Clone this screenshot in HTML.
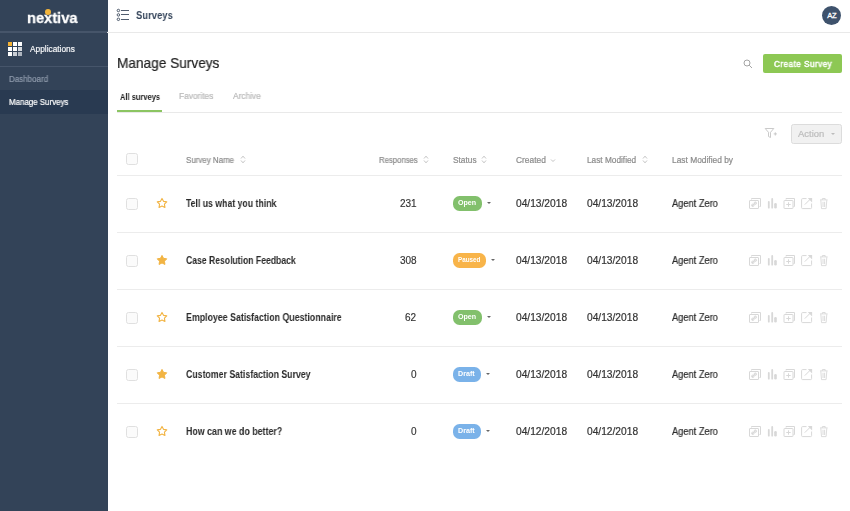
<!DOCTYPE html>
<html><head><meta charset="utf-8">
<style>
*{margin:0;padding:0;box-sizing:border-box}
html,body{width:850px;height:511px;overflow:hidden;background:#fff;font-family:"Liberation Sans",sans-serif}
[id^=t]{will-change:transform;-webkit-text-stroke:0.2px currentColor}
.abs{position:absolute}
.cb{position:absolute;width:12.4px;height:12.2px;border:1px solid #e0e0e0;border-radius:2.5px;background:#fbfbfb}
.badge{position:absolute;height:14.3px;border-radius:6.5px}
.caret{position:absolute;width:0;height:0;border-left:2.5px solid transparent;border-right:2.5px solid transparent;border-top:2.5px solid #666}
</style></head>
<body>
<div class="abs" style="left:0;top:0;width:107.5px;height:511px;background:#334358"></div>
<div class="abs" style="left:0;top:31.4px;width:107.5px;height:1.3px;background:#46556a"></div>
<div class="abs" style="left:0;top:66px;width:107.5px;height:1px;background:#46556a"></div>
<div class="abs" style="left:0;top:90px;width:107.5px;height:24px;background:#293a51"></div>

<div id="t0" style="position:absolute;white-space:nowrap;line-height:1;top:10px;font-size:15.5px;color:#fff;font-weight:bold;-webkit-text-stroke:0;-webkit-text-stroke:0.3px #fff;left:27.03px;transform:scaleX(0.9463);transform-origin:0 0">nextiva</div>
<div class="abs" style="left:45.2px;top:8.8px;width:5.8px;height:5.8px;border-radius:50%;background:#f3b53c"></div>
<div class="abs" style="left:7.8px;top:42px;width:4px;height:4px;background:#f5b335"></div>
<div class="abs" style="left:12.8px;top:42px;width:4px;height:4px;background:#fff"></div>
<div class="abs" style="left:17.8px;top:42px;width:4px;height:4px;background:#fff"></div>
<div class="abs" style="left:7.8px;top:47px;width:4px;height:4px;background:#fff"></div>
<div class="abs" style="left:12.8px;top:47px;width:4px;height:4px;background:#fff"></div>
<div class="abs" style="left:17.8px;top:47px;width:4px;height:4px;background:#d5d9de"></div>
<div class="abs" style="left:7.8px;top:52px;width:4px;height:4px;background:#fff"></div>
<div class="abs" style="left:12.8px;top:52px;width:4px;height:4px;background:#c9ced5"></div>
<div class="abs" style="left:17.8px;top:52px;width:4px;height:4px;background:#aeb5bf"></div>
<div id="t1" style="position:absolute;white-space:nowrap;line-height:1;top:44.8px;font-size:8.3px;color:#f4f5f7;font-weight:normal;left:30.39px;transform:scaleX(1.0022);transform-origin:0 0">Applications</div>
<div id="t2" style="position:absolute;white-space:nowrap;line-height:1;top:74.5px;font-size:8.3px;color:#8e9aab;font-weight:normal;left:8.60px;transform:scaleX(0.9634);transform-origin:0 0">Dashboard</div>
<div id="t3" style="position:absolute;white-space:nowrap;line-height:1;top:98.4px;font-size:8.3px;color:#fff;font-weight:normal;left:8.61px;transform:scaleX(0.9548);transform-origin:0 0">Manage Surveys</div>
<div class="abs" style="left:107px;top:32px;width:743px;height:1px;background:#e9e9e9"></div>
<svg class="abs" style="left:116px;top:8px" width="14" height="14" viewBox="0 0 14 14"><g fill="none" stroke="#3d4b5e" stroke-width="0.9"><circle cx="2.4" cy="2.5" r="1.25"/><circle cx="2.4" cy="6.9" r="1.25"/><circle cx="2.4" cy="11.3" r="1.25"/><path d="M5 2.5H13M5 6.5H13M5 11.5H13"/></g></svg>
<div id="t4" style="position:absolute;white-space:nowrap;line-height:1;top:9.6px;font-size:11px;color:#34445a;font-weight:bold;-webkit-text-stroke:0;left:136.00px;transform:scaleX(0.8605);transform-origin:0 0">Surveys</div>
<div class="abs" style="left:822.2px;top:5.6px;width:19.2px;height:19.2px;border-radius:50%;background:#3e526c;color:#fff;font-size:7.6px;font-weight:normal;-webkit-text-stroke:0.3px #fff;text-align:center;line-height:19.5px;letter-spacing:-0.2px">AZ</div>
<div id="t5" style="position:absolute;white-space:nowrap;line-height:1;top:56px;font-size:14.2px;color:#222;font-weight:normal;left:116.62px;transform:scaleX(0.9619);transform-origin:0 0">Manage Surveys</div>
<svg class="abs" style="left:743px;top:59px" width="10" height="10" viewBox="0 0 10 10"><g fill="none" stroke="#9a9a9a" stroke-width="0.9"><circle cx="4" cy="4" r="3"/><path d="M6.2 6.2L9 9"/></g></svg>
<div class="abs" style="left:763px;top:54px;width:78.5px;height:19px;border-radius:2px;background:#8dc854"></div>
<div id="t6" style="position:absolute;white-space:nowrap;line-height:1;top:59.9px;font-size:8.4px;color:#fff;font-weight:normal;letter-spacing:0.5px;-webkit-text-stroke:0.45px #fff;left:773.60px;transform:scaleX(0.9700);transform-origin:0 0">Create Survey</div>
<div id="t7" style="position:absolute;white-space:nowrap;line-height:1;top:92.7px;font-size:8.8px;color:#222;font-weight:bold;-webkit-text-stroke:0;left:119.73px;transform:scaleX(0.8532);transform-origin:0 0">All surveys</div>
<div id="t8" style="position:absolute;white-space:nowrap;line-height:1;top:92.2px;font-size:8.6px;color:#b9b9b9;font-weight:normal;left:178.79px;transform:scaleX(0.9743);transform-origin:0 0">Favorites</div>
<div id="t9" style="position:absolute;white-space:nowrap;line-height:1;top:92.2px;font-size:8.6px;color:#b9b9b9;font-weight:normal;left:232.79px;transform:scaleX(0.9690);transform-origin:0 0">Archive</div>
<div class="abs" style="left:117px;top:112px;width:725px;height:1px;background:#e9e9e9"></div>
<div class="abs" style="left:117px;top:110.2px;width:45px;height:2px;background:#8cc562"></div>
<svg class="abs" style="left:764px;top:127px" width="15" height="12" viewBox="0 0 15 12"><g fill="none" stroke="#c4c4c4" stroke-width="0.9"><path d="M1.2 1.5H9.8L6.5 5.3V10.5L4.5 9.5V5.3Z"/><path d="M11.3 5.3V8.5M9.7 6.9H12.9"/></g></svg>
<div class="abs" style="left:791px;top:124px;width:51px;height:19.5px;border-radius:2.5px;background:#f1f1f1;border:1px solid #dcdcdc"></div>
<div id="t10" style="position:absolute;white-space:nowrap;line-height:1;top:129.5px;font-size:8.6px;color:#bcbcbc;font-weight:normal;left:798.00px;transform:scaleX(1.1000);transform-origin:0 0">Action</div>
<div class="caret" style="left:830.5px;top:133px;border-top-color:#bcbcbc"></div>
<div class="cb" style="left:126px;top:153.2px"></div>
<div id="t11" style="position:absolute;white-space:nowrap;line-height:1;top:156.5px;font-size:8.2px;color:#8c8c8c;font-weight:normal;left:186.21px;transform:scaleX(0.9680);transform-origin:0 0">Survey Name</div><svg class="abs" style="left:239.5px;top:154.8px" width="6" height="9" viewBox="0 0 6 9"><path d="M1 3.5L3 1.2L5 3.5M1 5.5L3 7.8L5 5.5" fill="none" stroke="#aaaaaa" stroke-width="0.7"/></svg>
<div id="t12" style="position:absolute;white-space:nowrap;line-height:1;top:156.5px;font-size:8.2px;color:#8c8c8c;font-weight:normal;left:379.40px;transform:scaleX(0.9463);transform-origin:0 0">Responses</div><svg class="abs" style="left:422.5px;top:154.8px" width="6" height="9" viewBox="0 0 6 9"><path d="M1 3.5L3 1.2L5 3.5M1 5.5L3 7.8L5 5.5" fill="none" stroke="#aaaaaa" stroke-width="0.7"/></svg>
<div id="t13" style="position:absolute;white-space:nowrap;line-height:1;top:156.5px;font-size:8.2px;color:#8c8c8c;font-weight:normal;left:453.00px;transform:scaleX(1.0174);transform-origin:0 0">Status</div><svg class="abs" style="left:481px;top:154.8px" width="6" height="9" viewBox="0 0 6 9"><path d="M1 3.5L3 1.2L5 3.5M1 5.5L3 7.8L5 5.5" fill="none" stroke="#aaaaaa" stroke-width="0.7"/></svg>
<div id="t14" style="position:absolute;white-space:nowrap;line-height:1;top:156.5px;font-size:8.2px;color:#8c8c8c;font-weight:normal;left:516.00px;transform:scaleX(1.0241);transform-origin:0 0">Created</div>
<svg class="abs" style="left:550px;top:157.5px" width="6" height="5" viewBox="0 0 6 5"><path d="M1 1.5L3 3.5L5 1.5" fill="none" stroke="#aaaaaa" stroke-width="0.7"/></svg>
<div id="t15" style="position:absolute;white-space:nowrap;line-height:1;top:156.5px;font-size:8.2px;color:#8c8c8c;font-weight:normal;left:587.38px;transform:scaleX(1.0102);transform-origin:0 0">Last Modified</div><svg class="abs" style="left:641.5px;top:154.8px" width="6" height="9" viewBox="0 0 6 9"><path d="M1 3.5L3 1.2L5 3.5M1 5.5L3 7.8L5 5.5" fill="none" stroke="#aaaaaa" stroke-width="0.7"/></svg>
<div id="t16" style="position:absolute;white-space:nowrap;line-height:1;top:156.5px;font-size:8.2px;color:#8c8c8c;font-weight:normal;left:671.59px;transform:scaleX(1.0233);transform-origin:0 0">Last Modified by</div>
<div class="abs" style="left:117px;top:175px;width:725px;height:1px;background:#ececec"></div>
<div class="cb" style="left:126px;top:198.3px"></div>
<svg class="abs" style="left:156.3px;top:197px" width="12" height="12" viewBox="0 0 12 12"><path d="M6.00 1.40L7.50 4.34L10.76 4.85L8.43 7.19L8.94 10.45L6.00 8.95L3.06 10.45L3.57 7.19L1.24 4.85L4.50 4.34Z" fill="none" stroke="#f2b443" stroke-width="1.1" stroke-linejoin="round"/></svg>
<div id="t17" style="position:absolute;white-space:nowrap;line-height:1;top:199px;font-size:10.4px;color:#2a2a2a;font-weight:bold;-webkit-text-stroke:0;left:186.26px;transform:scaleX(0.8380);transform-origin:0 0">Tell us what you think</div>
<div style="position:absolute;white-space:nowrap;line-height:1;right:433.8px;top:198.7px;font-size:10px;color:#333;will-change:transform;-webkit-text-stroke:0.15px currentColor">231</div>
<div class="badge" style="left:453px;top:196.3px;width:29px;background:#82c06c"></div>
<div id="t18" style="position:absolute;white-space:nowrap;line-height:1;top:200.1px;font-size:6.3px;color:#fff;font-weight:bold;-webkit-text-stroke:0;left:457.94px;transform:scaleX(1.1250);transform-origin:0 0">Open</div>
<div class="caret" style="left:486.5px;top:202px"></div>
<div id="t19" style="position:absolute;white-space:nowrap;line-height:1;top:198.5px;font-size:10px;color:#333;font-weight:normal;left:515.59px;transform:scaleX(1.0200);transform-origin:0 0">04/13/2018</div>
<div id="t20" style="position:absolute;white-space:nowrap;line-height:1;top:198.5px;font-size:10px;color:#333;font-weight:normal;left:587.00px;transform:scaleX(1.0200);transform-origin:0 0">04/13/2018</div>
<div id="t21" style="position:absolute;white-space:nowrap;line-height:1;top:198.7px;font-size:10.1px;color:#2a2a2a;font-weight:normal;left:672.00px;transform:scaleX(0.9200);transform-origin:0 0">Agent Zero</div>
<svg class="abs" style="left:748px;top:197px" width="82" height="13" viewBox="0 0 82 13"><g fill="none" stroke="#d8d8d8" stroke-width="1"><path d="M3.5 2.5V1.5H12.5V9.5H11.5"/><rect x="1.5" y="3.5" width="9" height="8" rx="0.5"/><path d="M4 9L8 5.5"/><circle cx="4.8" cy="8.3" r="1.2"/><circle cx="7.3" cy="6.2" r="1.2"/></g><g fill="#d8d8d8"><rect x="19.9" y="4.1" width="1.8" height="7.5" rx="0.9"/><rect x="23.3" y="1" width="1.8" height="10.6" rx="0.9"/><rect x="26.2" y="6" width="2.6" height="5.6" rx="1.3"/></g><g fill="none" stroke="#d8d8d8" stroke-width="1"><path d="M38 2.5V1.5H46.5V9.5H45.5"/><rect x="36" y="3.5" width="9" height="8" rx="0.5"/><path d="M40.5 5.3V9.7M38.3 7.5H42.7"/></g><g fill="none" stroke="#d8d8d8" stroke-width="1"><path d="M58.5 1.6H54.6Q53.6 1.6 53.6 2.6V10.6Q53.6 11.6 54.6 11.6H62.6Q63.6 11.6 63.6 10.6V6.5"/><path d="M56.8 7.6L62.5 1.9"/></g><path d="M59.8 1.1H64.1V5.4Z" fill="#d8d8d8"/><g fill="none" stroke="#d8d8d8" stroke-width="0.9"><path d="M72 2.9H79.6M74.4 2.9V1.5H77.2V2.9M72.8 3.2L73.5 11.6H78.1L78.8 3.2M75 4.8V10M76.6 4.8V10"/></g></svg>
<div class="abs" style="left:117px;top:232px;width:725px;height:1px;background:#ececec"></div>
<div class="cb" style="left:126px;top:255.3px"></div>
<svg class="abs" style="left:156.3px;top:254px" width="12" height="12" viewBox="0 0 12 12"><path d="M6.00 1.40L7.50 4.34L10.76 4.85L8.43 7.19L8.94 10.45L6.00 8.95L3.06 10.45L3.57 7.19L1.24 4.85L4.50 4.34Z" fill="#f2b443" stroke="#f2b443" stroke-width="1" stroke-linejoin="round"/></svg>
<div id="t22" style="position:absolute;white-space:nowrap;line-height:1;top:256px;font-size:10.4px;color:#2a2a2a;font-weight:bold;-webkit-text-stroke:0;left:186.26px;transform:scaleX(0.8293);transform-origin:0 0">Case Resolution Feedback</div>
<div style="position:absolute;white-space:nowrap;line-height:1;right:433.8px;top:255.7px;font-size:10px;color:#333;will-change:transform;-webkit-text-stroke:0.15px currentColor">308</div>
<div class="badge" style="left:453px;top:253.3px;width:33px;background:#f8b449"></div>
<div id="t23" style="position:absolute;white-space:nowrap;line-height:1;top:257.1px;font-size:6.3px;color:#fff;font-weight:bold;-webkit-text-stroke:0;left:458.00px;transform:scaleX(1.0000);transform-origin:0 0">Paused</div>
<div class="caret" style="left:490.5px;top:259px"></div>
<div id="t24" style="position:absolute;white-space:nowrap;line-height:1;top:255.5px;font-size:10px;color:#333;font-weight:normal;left:515.59px;transform:scaleX(1.0200);transform-origin:0 0">04/13/2018</div>
<div id="t25" style="position:absolute;white-space:nowrap;line-height:1;top:255.5px;font-size:10px;color:#333;font-weight:normal;left:587.00px;transform:scaleX(1.0200);transform-origin:0 0">04/13/2018</div>
<div id="t26" style="position:absolute;white-space:nowrap;line-height:1;top:255.7px;font-size:10.1px;color:#2a2a2a;font-weight:normal;left:672.00px;transform:scaleX(0.9200);transform-origin:0 0">Agent Zero</div>
<svg class="abs" style="left:748px;top:254px" width="82" height="13" viewBox="0 0 82 13"><g fill="none" stroke="#d8d8d8" stroke-width="1"><path d="M3.5 2.5V1.5H12.5V9.5H11.5"/><rect x="1.5" y="3.5" width="9" height="8" rx="0.5"/><path d="M4 9L8 5.5"/><circle cx="4.8" cy="8.3" r="1.2"/><circle cx="7.3" cy="6.2" r="1.2"/></g><g fill="#d8d8d8"><rect x="19.9" y="4.1" width="1.8" height="7.5" rx="0.9"/><rect x="23.3" y="1" width="1.8" height="10.6" rx="0.9"/><rect x="26.2" y="6" width="2.6" height="5.6" rx="1.3"/></g><g fill="none" stroke="#d8d8d8" stroke-width="1"><path d="M38 2.5V1.5H46.5V9.5H45.5"/><rect x="36" y="3.5" width="9" height="8" rx="0.5"/><path d="M40.5 5.3V9.7M38.3 7.5H42.7"/></g><g fill="none" stroke="#d8d8d8" stroke-width="1"><path d="M58.5 1.6H54.6Q53.6 1.6 53.6 2.6V10.6Q53.6 11.6 54.6 11.6H62.6Q63.6 11.6 63.6 10.6V6.5"/><path d="M56.8 7.6L62.5 1.9"/></g><path d="M59.8 1.1H64.1V5.4Z" fill="#d8d8d8"/><g fill="none" stroke="#d8d8d8" stroke-width="0.9"><path d="M72 2.9H79.6M74.4 2.9V1.5H77.2V2.9M72.8 3.2L73.5 11.6H78.1L78.8 3.2M75 4.8V10M76.6 4.8V10"/></g></svg>
<div class="abs" style="left:117px;top:289px;width:725px;height:1px;background:#ececec"></div>
<div class="cb" style="left:126px;top:312.3px"></div>
<svg class="abs" style="left:156.3px;top:311px" width="12" height="12" viewBox="0 0 12 12"><path d="M6.00 1.40L7.50 4.34L10.76 4.85L8.43 7.19L8.94 10.45L6.00 8.95L3.06 10.45L3.57 7.19L1.24 4.85L4.50 4.34Z" fill="none" stroke="#f2b443" stroke-width="1.1" stroke-linejoin="round"/></svg>
<div id="t27" style="position:absolute;white-space:nowrap;line-height:1;top:313px;font-size:10.4px;color:#2a2a2a;font-weight:bold;-webkit-text-stroke:0;left:186.26px;transform:scaleX(0.8478);transform-origin:0 0">Employee Satisfaction Questionnaire</div>
<div style="position:absolute;white-space:nowrap;line-height:1;right:433.8px;top:312.7px;font-size:10px;color:#333;will-change:transform;-webkit-text-stroke:0.15px currentColor">62</div>
<div class="badge" style="left:453px;top:310.3px;width:29px;background:#82c06c"></div>
<div id="t28" style="position:absolute;white-space:nowrap;line-height:1;top:314.1px;font-size:6.3px;color:#fff;font-weight:bold;-webkit-text-stroke:0;left:457.94px;transform:scaleX(1.1250);transform-origin:0 0">Open</div>
<div class="caret" style="left:486.5px;top:316px"></div>
<div id="t29" style="position:absolute;white-space:nowrap;line-height:1;top:312.5px;font-size:10px;color:#333;font-weight:normal;left:515.59px;transform:scaleX(1.0200);transform-origin:0 0">04/13/2018</div>
<div id="t30" style="position:absolute;white-space:nowrap;line-height:1;top:312.5px;font-size:10px;color:#333;font-weight:normal;left:587.00px;transform:scaleX(1.0200);transform-origin:0 0">04/13/2018</div>
<div id="t31" style="position:absolute;white-space:nowrap;line-height:1;top:312.7px;font-size:10.1px;color:#2a2a2a;font-weight:normal;left:672.00px;transform:scaleX(0.9200);transform-origin:0 0">Agent Zero</div>
<svg class="abs" style="left:748px;top:311px" width="82" height="13" viewBox="0 0 82 13"><g fill="none" stroke="#d8d8d8" stroke-width="1"><path d="M3.5 2.5V1.5H12.5V9.5H11.5"/><rect x="1.5" y="3.5" width="9" height="8" rx="0.5"/><path d="M4 9L8 5.5"/><circle cx="4.8" cy="8.3" r="1.2"/><circle cx="7.3" cy="6.2" r="1.2"/></g><g fill="#d8d8d8"><rect x="19.9" y="4.1" width="1.8" height="7.5" rx="0.9"/><rect x="23.3" y="1" width="1.8" height="10.6" rx="0.9"/><rect x="26.2" y="6" width="2.6" height="5.6" rx="1.3"/></g><g fill="none" stroke="#d8d8d8" stroke-width="1"><path d="M38 2.5V1.5H46.5V9.5H45.5"/><rect x="36" y="3.5" width="9" height="8" rx="0.5"/><path d="M40.5 5.3V9.7M38.3 7.5H42.7"/></g><g fill="none" stroke="#d8d8d8" stroke-width="1"><path d="M58.5 1.6H54.6Q53.6 1.6 53.6 2.6V10.6Q53.6 11.6 54.6 11.6H62.6Q63.6 11.6 63.6 10.6V6.5"/><path d="M56.8 7.6L62.5 1.9"/></g><path d="M59.8 1.1H64.1V5.4Z" fill="#d8d8d8"/><g fill="none" stroke="#d8d8d8" stroke-width="0.9"><path d="M72 2.9H79.6M74.4 2.9V1.5H77.2V2.9M72.8 3.2L73.5 11.6H78.1L78.8 3.2M75 4.8V10M76.6 4.8V10"/></g></svg>
<div class="abs" style="left:117px;top:346px;width:725px;height:1px;background:#ececec"></div>
<div class="cb" style="left:126px;top:369.3px"></div>
<svg class="abs" style="left:156.3px;top:368px" width="12" height="12" viewBox="0 0 12 12"><path d="M6.00 1.40L7.50 4.34L10.76 4.85L8.43 7.19L8.94 10.45L6.00 8.95L3.06 10.45L3.57 7.19L1.24 4.85L4.50 4.34Z" fill="#f2b443" stroke="#f2b443" stroke-width="1" stroke-linejoin="round"/></svg>
<div id="t32" style="position:absolute;white-space:nowrap;line-height:1;top:370px;font-size:10.4px;color:#2a2a2a;font-weight:bold;-webkit-text-stroke:0;left:186.26px;transform:scaleX(0.8426);transform-origin:0 0">Customer Satisfaction Survey</div>
<div style="position:absolute;white-space:nowrap;line-height:1;right:433.8px;top:369.7px;font-size:10px;color:#333;will-change:transform;-webkit-text-stroke:0.15px currentColor">0</div>
<div class="badge" style="left:453px;top:367.3px;width:28px;background:#7ab2e9"></div>
<div id="t33" style="position:absolute;white-space:nowrap;line-height:1;top:371.1px;font-size:6.3px;color:#fff;font-weight:bold;-webkit-text-stroke:0;left:457.93px;transform:scaleX(1.1333);transform-origin:0 0">Draft</div>
<div class="caret" style="left:485.5px;top:373px"></div>
<div id="t34" style="position:absolute;white-space:nowrap;line-height:1;top:369.5px;font-size:10px;color:#333;font-weight:normal;left:515.59px;transform:scaleX(1.0200);transform-origin:0 0">04/13/2018</div>
<div id="t35" style="position:absolute;white-space:nowrap;line-height:1;top:369.5px;font-size:10px;color:#333;font-weight:normal;left:587.00px;transform:scaleX(1.0200);transform-origin:0 0">04/13/2018</div>
<div id="t36" style="position:absolute;white-space:nowrap;line-height:1;top:369.7px;font-size:10.1px;color:#2a2a2a;font-weight:normal;left:672.00px;transform:scaleX(0.9200);transform-origin:0 0">Agent Zero</div>
<svg class="abs" style="left:748px;top:368px" width="82" height="13" viewBox="0 0 82 13"><g fill="none" stroke="#d8d8d8" stroke-width="1"><path d="M3.5 2.5V1.5H12.5V9.5H11.5"/><rect x="1.5" y="3.5" width="9" height="8" rx="0.5"/><path d="M4 9L8 5.5"/><circle cx="4.8" cy="8.3" r="1.2"/><circle cx="7.3" cy="6.2" r="1.2"/></g><g fill="#d8d8d8"><rect x="19.9" y="4.1" width="1.8" height="7.5" rx="0.9"/><rect x="23.3" y="1" width="1.8" height="10.6" rx="0.9"/><rect x="26.2" y="6" width="2.6" height="5.6" rx="1.3"/></g><g fill="none" stroke="#d8d8d8" stroke-width="1"><path d="M38 2.5V1.5H46.5V9.5H45.5"/><rect x="36" y="3.5" width="9" height="8" rx="0.5"/><path d="M40.5 5.3V9.7M38.3 7.5H42.7"/></g><g fill="none" stroke="#d8d8d8" stroke-width="1"><path d="M58.5 1.6H54.6Q53.6 1.6 53.6 2.6V10.6Q53.6 11.6 54.6 11.6H62.6Q63.6 11.6 63.6 10.6V6.5"/><path d="M56.8 7.6L62.5 1.9"/></g><path d="M59.8 1.1H64.1V5.4Z" fill="#d8d8d8"/><g fill="none" stroke="#d8d8d8" stroke-width="0.9"><path d="M72 2.9H79.6M74.4 2.9V1.5H77.2V2.9M72.8 3.2L73.5 11.6H78.1L78.8 3.2M75 4.8V10M76.6 4.8V10"/></g></svg>
<div class="abs" style="left:117px;top:403px;width:725px;height:1px;background:#ececec"></div>
<div class="cb" style="left:126px;top:426.3px"></div>
<svg class="abs" style="left:156.3px;top:425px" width="12" height="12" viewBox="0 0 12 12"><path d="M6.00 1.40L7.50 4.34L10.76 4.85L8.43 7.19L8.94 10.45L6.00 8.95L3.06 10.45L3.57 7.19L1.24 4.85L4.50 4.34Z" fill="none" stroke="#f2b443" stroke-width="1.1" stroke-linejoin="round"/></svg>
<div id="t37" style="position:absolute;white-space:nowrap;line-height:1;top:427px;font-size:10.4px;color:#2a2a2a;font-weight:bold;-webkit-text-stroke:0;left:186.25px;transform:scaleX(0.8504);transform-origin:0 0">How can we do better?</div>
<div style="position:absolute;white-space:nowrap;line-height:1;right:433.8px;top:426.7px;font-size:10px;color:#333;will-change:transform;-webkit-text-stroke:0.15px currentColor">0</div>
<div class="badge" style="left:453px;top:424.3px;width:28px;background:#7ab2e9"></div>
<div id="t38" style="position:absolute;white-space:nowrap;line-height:1;top:428.1px;font-size:6.3px;color:#fff;font-weight:bold;-webkit-text-stroke:0;left:457.93px;transform:scaleX(1.1333);transform-origin:0 0">Draft</div>
<div class="caret" style="left:485.5px;top:430px"></div>
<div id="t39" style="position:absolute;white-space:nowrap;line-height:1;top:426.5px;font-size:10px;color:#333;font-weight:normal;left:515.59px;transform:scaleX(1.0200);transform-origin:0 0">04/12/2018</div>
<div id="t40" style="position:absolute;white-space:nowrap;line-height:1;top:426.5px;font-size:10px;color:#333;font-weight:normal;left:587.00px;transform:scaleX(1.0200);transform-origin:0 0">04/12/2018</div>
<div id="t41" style="position:absolute;white-space:nowrap;line-height:1;top:426.7px;font-size:10.1px;color:#2a2a2a;font-weight:normal;left:672.00px;transform:scaleX(0.9200);transform-origin:0 0">Agent Zero</div>
<svg class="abs" style="left:748px;top:425px" width="82" height="13" viewBox="0 0 82 13"><g fill="none" stroke="#d8d8d8" stroke-width="1"><path d="M3.5 2.5V1.5H12.5V9.5H11.5"/><rect x="1.5" y="3.5" width="9" height="8" rx="0.5"/><path d="M4 9L8 5.5"/><circle cx="4.8" cy="8.3" r="1.2"/><circle cx="7.3" cy="6.2" r="1.2"/></g><g fill="#d8d8d8"><rect x="19.9" y="4.1" width="1.8" height="7.5" rx="0.9"/><rect x="23.3" y="1" width="1.8" height="10.6" rx="0.9"/><rect x="26.2" y="6" width="2.6" height="5.6" rx="1.3"/></g><g fill="none" stroke="#d8d8d8" stroke-width="1"><path d="M38 2.5V1.5H46.5V9.5H45.5"/><rect x="36" y="3.5" width="9" height="8" rx="0.5"/><path d="M40.5 5.3V9.7M38.3 7.5H42.7"/></g><g fill="none" stroke="#d8d8d8" stroke-width="1"><path d="M58.5 1.6H54.6Q53.6 1.6 53.6 2.6V10.6Q53.6 11.6 54.6 11.6H62.6Q63.6 11.6 63.6 10.6V6.5"/><path d="M56.8 7.6L62.5 1.9"/></g><path d="M59.8 1.1H64.1V5.4Z" fill="#d8d8d8"/><g fill="none" stroke="#d8d8d8" stroke-width="0.9"><path d="M72 2.9H79.6M74.4 2.9V1.5H77.2V2.9M72.8 3.2L73.5 11.6H78.1L78.8 3.2M75 4.8V10M76.6 4.8V10"/></g></svg>
</body></html>
